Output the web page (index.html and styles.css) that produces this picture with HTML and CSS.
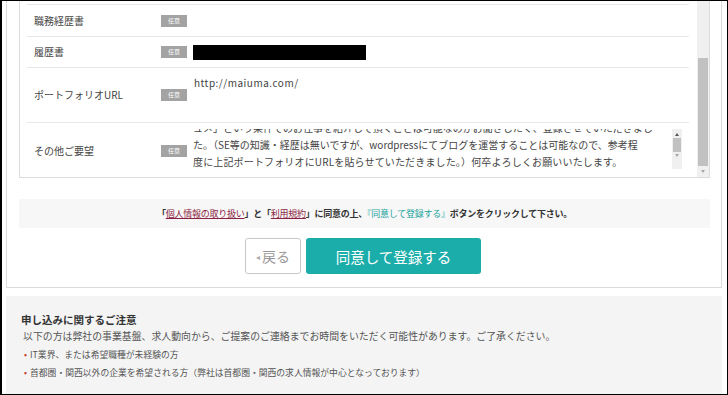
FILE: index.html
```html
<!DOCTYPE html>
<html lang="ja">
<head>
<meta charset="utf-8">
<title>登録フォーム</title>
<link rel="stylesheet" href="styles.css">
</head>
<body>
<div class="frame">
  <div class="panel">
    <div class="formbox">
      <div class="rows">
        <div class="row row1">
          <div class="label">職務経歴書</div>
          <span class="badge">任意</span>
          <div class="value"></div>
        </div>
        <div class="row row2">
          <div class="label">履歴書</div>
          <span class="badge">任意</span>
          <div class="value"><div class="redact"></div></div>
        </div>
        <div class="row row3">
          <div class="label">ポートフォリオURL</div>
          <span class="badge">任意</span>
          <div class="value url">http://maiuma.com/</div>
        </div>
        <div class="row row4">
          <div class="label">その他ご要望</div>
          <span class="badge">任意</span>
          <div class="memo">
            <div class="memo-text">
              <p>ュメ」という条件でのお仕事を紹介して頂くことは可能なのかお聞きしたく、登録させていただきまし</p>
              <p>た。（SE等の知識・経歴は無いですが、wordpressにてブログを運営することは可能なので、参考程</p>
              <p>度に上記ポートフォリオにURLを貼らせていただきました。）何卒よろしくお願いいたします。</p>
            </div>
            <div class="mini-scroll">
              <span class="arr up"></span>
              <span class="mini-thumb"></span>
              <span class="arr down"></span>
            </div>
          </div>
        </div>
      </div>
      <div class="vscroll">
        <span class="vthumb"></span>
        <span class="arr down"></span>
      </div>
    </div>

    <div class="notice">
      「<a href="#" class="link">個人情報の取り扱い</a>」と「<a href="#" class="link">利用規約</a>」に同意の上、<span class="teal">『同意して登録する』</span>ボタンをクリックして下さい。
    </div>

    <div class="actions">
      <button class="btn-back"><span class="tri">◂</span>戻る</button>
      <button class="btn-submit">同意して登録する</button>
    </div>
  </div>

  <div class="caution">
    <h3 class="caution-title">申し込みに関するご注意</h3>
    <p class="caution-desc">以下の方は弊社の事業基盤、求人動向から、ご提案のご連絡までお時間をいただく可能性があります。ご了承ください。</p>
    <ul class="caution-list">
      <li>IT業界、または希望職種が未経験の方</li>
      <li>首都圏・関西以外の企業を希望される方（弊社は首都圏・関西の求人情報が中心となっております）</li>
    </ul>
  </div>
</div>
</body>
</html>
```

FILE: styles.css
```css
* { box-sizing: border-box; }
html, body { margin: 0; padding: 0; background: #fff; }
body {
  font-family: "Noto Sans CJK JP", "Noto Sans", sans-serif;
  color: #333;
}
.frame {
  width: 728px;
  height: 395px;
  border: 1px solid #000;
  border-left-width: 2px;
  overflow: hidden;
  background: #fff;
}
.panel {
  margin-left: 4px;
  width: 716px;
  border: 1px solid #dcdcdc;
  border-top: none;
  background: #fff;
  padding: 0 11px 13px 12px;
}
.formbox {
  width: 691px;
  height: 177px;
  border: 1px solid #dcdcdc;
  border-top: none;
  display: flex;
  overflow: hidden;
}
.rows {
  width: 677px;
  padding: 3px 8px 0 7px;
}
.row {
  display: flex;
  align-items: center;
  border-top: 1px solid #e8e8e8;
  font-size: 10px;
}
.row1 { height: 32px; }
.row2 { height: 31px; }
.row3 { height: 55px; }
.row4 { height: 56px; }
.label {
  width: 134px;
  padding-left: 7px;
  color: #444;
  line-height: 14px;
}
.badge {
  width: 26px;
  height: 12px;
  background: #a3a3a3;
  color: #fff;
  font-size: 6px;
  line-height: 12px;
  text-align: center;
  flex-shrink: 0;
}
.value { margin-left: 6px; flex: 1; }
.redact { width: 173px; height: 15px; background: #000; margin-top: 1px; }
.url {
  align-self: flex-start;
  padding-top: 8px;
  line-height: 14px;
  color: #444;
  margin-left: 7px;
  letter-spacing: 0.5px;
}
.memo {
  align-self: flex-start;
  margin-top: 6px;
  margin-left: 6px;
  height: 48px;
  width: 490px;
  display: flex;
  overflow: hidden;
}
.memo-text {
  flex: 1;
  overflow: hidden;
  color: #444;
}
.memo-text p {
  margin: 0;
  line-height: 17px;
  white-space: nowrap;
}
.memo-text p:first-child { margin-top: -10.5px; }
.memo-text p:last-child { letter-spacing: 0.15px; }
.mini-scroll {
  width: 10px;
  height: 40px;
  margin: 0 1px 0 0;
  background: #f0f0f0;
  display: flex;
  flex-direction: column;
  align-items: center;
}
.mini-thumb {
  width: 8px;
  height: 14px;
  background: #c1c1c1;
  margin: 2px 0 2px;
}
.arr { width: 0; height: 0; border-left: 2.5px solid transparent; border-right: 2.5px solid transparent; }
.arr.up { border-bottom: 3px solid #555; margin-top: 4px; }
.arr.down { border-top: 3px solid #a8a8a8; }
.vscroll {
  width: 12px;
  height: 176px;
  background: #f0f0f0;
  display: flex;
  flex-direction: column;
  align-items: center;
}
.vthumb {
  width: 10px;
  height: 108px;
  background: #c1c1c1;
  margin-top: 57px;
  margin-bottom: 4px;
}
.notice {
  margin-top: 21px;
  width: 691px;
  height: 29px;
  background: #f7f7f7;
  text-align: center;
  font-size: 9px;
  line-height: 29px;
  font-weight: bold;
  color: #333;
  letter-spacing: -0.25px;
}
.notice .link { color: #8c1f44; text-decoration: underline; font-weight: normal; }
.notice .teal { color: #1ba39c; font-weight: normal; }
.actions {
  margin-top: 10px;
  display: flex;
  justify-content: center;
  gap: 5px;
  padding-right: 3px;
}
.btn-back {
  width: 56px;
  height: 36px;
  border: 1px solid #c8c8c8;
  border-radius: 3px;
  background: #fff;
  color: #999;
  font-family: inherit;
  font-size: 14px;
  padding: 0;
  display: flex;
  align-items: center;
  justify-content: center;
}
.btn-back .tri { font-size: 8px; margin-right: 2px; color: #aaa; }
.btn-submit {
  width: 175px;
  height: 36px;
  border: none;
  border-radius: 3px;
  background: #1badaa;
  color: #fff;
  font-family: inherit;
  font-size: 14.5px;
  padding: 0;
}
.caution {
  margin: 8px 0 0 4px;
  width: 716px;
  height: 120px;
  background: #f4f4f4;
  padding: 17px 15px 0 15px;
}
.caution-title {
  margin: 0;
  font-size: 10.5px;
  line-height: 14px;
  font-weight: bold;
  color: #333;
}
.caution-desc {
  margin: 2px 0 0 2px;
  font-size: 9.9px;
  line-height: 14px;
  color: #555;
}
.caution-list {
  list-style: none;
  margin: 3px 0 0 3px;
  padding: 0;
  font-size: 8.8px;
  line-height: 18px;
  color: #555;
}
.caution-list li::before {
  content: "•";
  color: #c0392b;
  margin-right: 3px;
}
```
